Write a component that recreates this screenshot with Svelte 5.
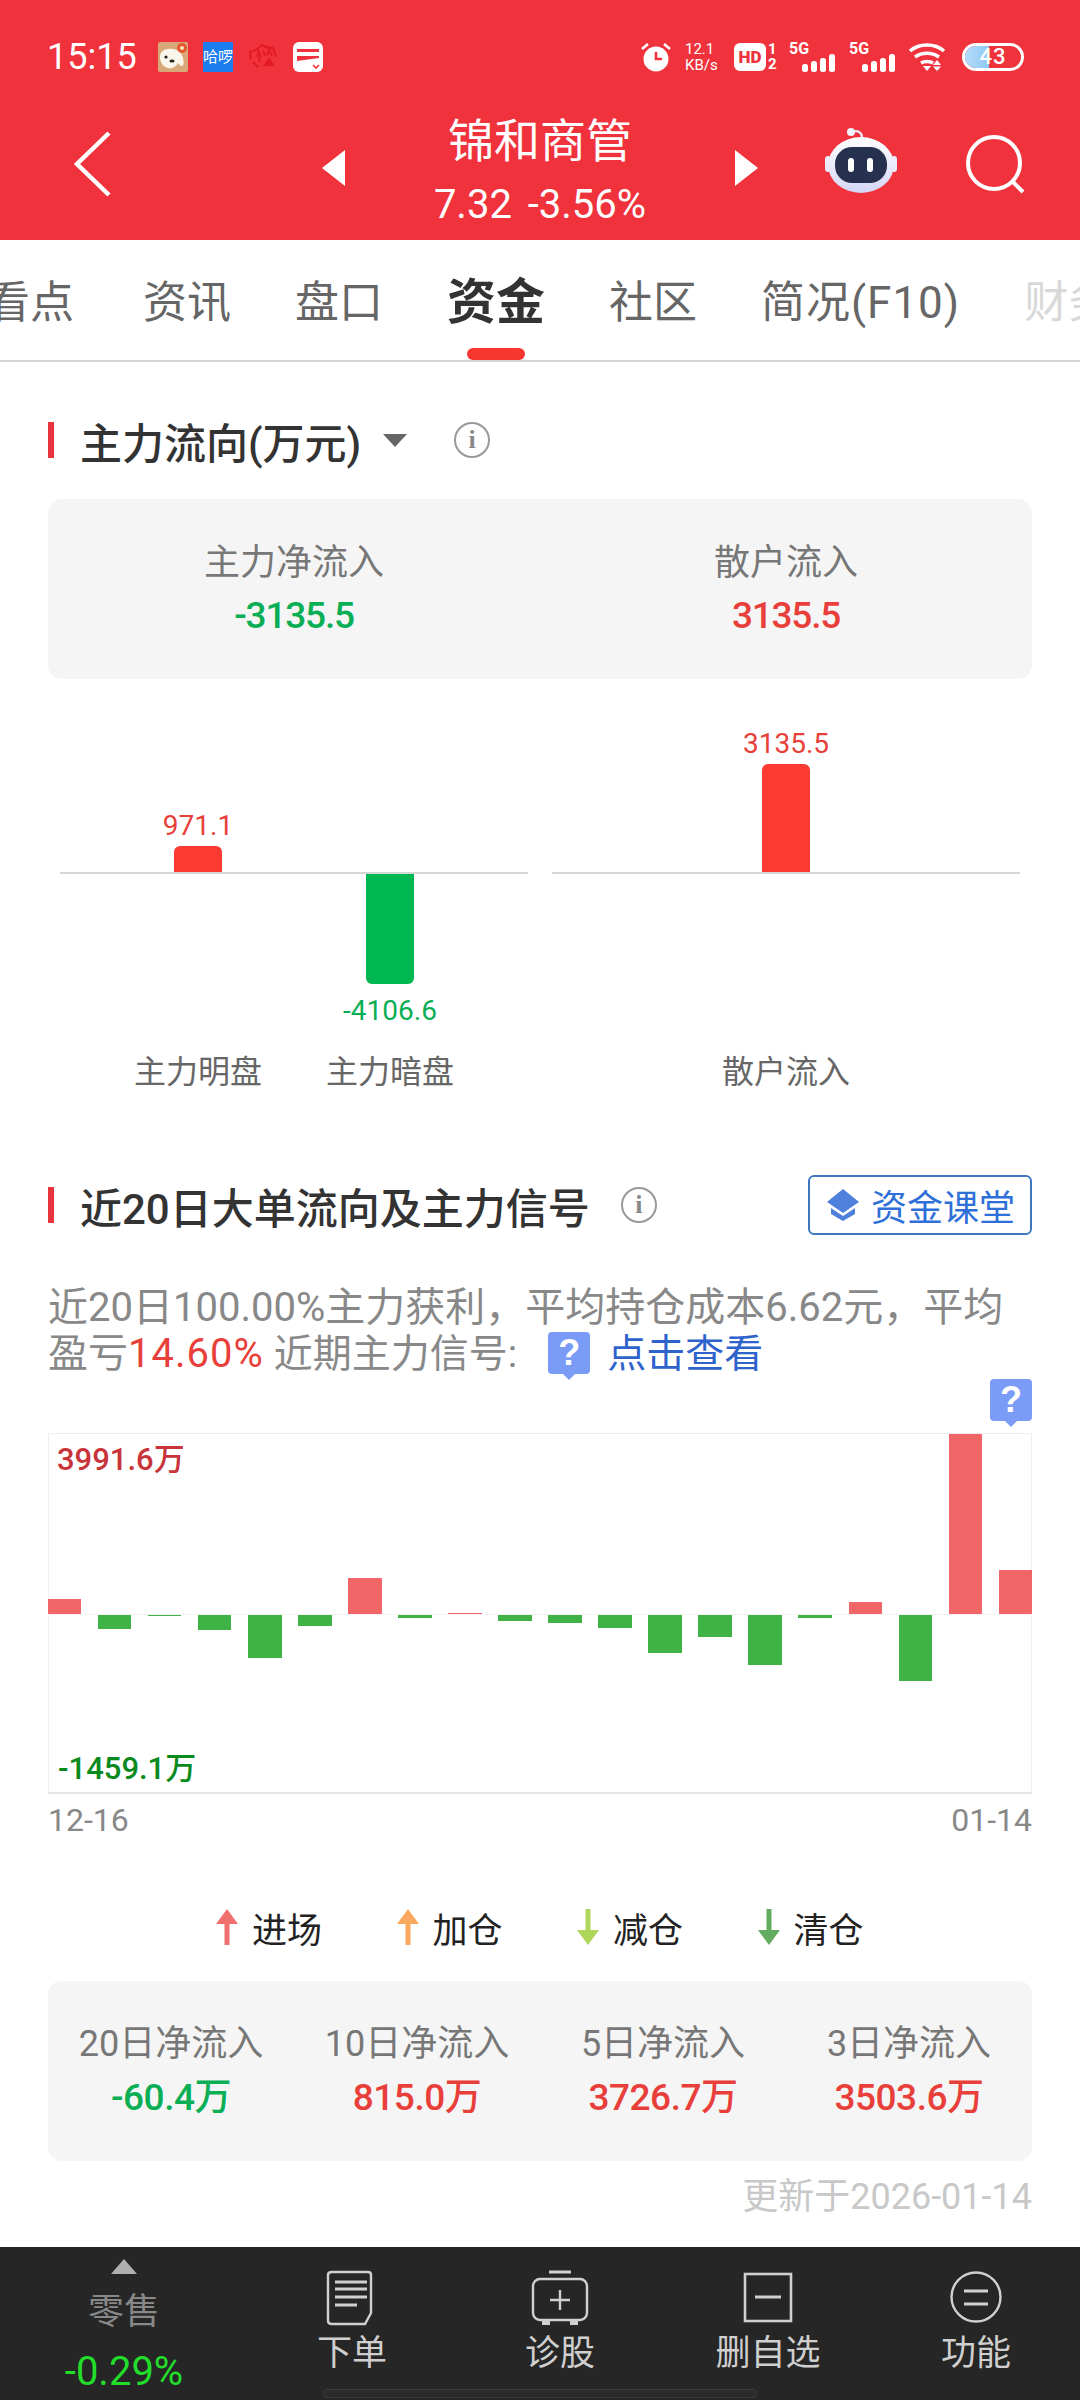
<script>
  const tabs = ["看点", "资讯", "盘口", "资金", "社区", "简况(F10)", "财务"];

  const mainCols = [
    { label: "主力明盘", value: "971.1", h: 26, up: true },
    { label: "主力暗盘", value: "-4106.6", h: 110, up: false },
  ];

  // one value per day, px from the zero line
  const days = [15, -14.3, -1, -14.7, -43, -10.7, 35.7, -3, 0.7, -5.7, -8.3, -13.3, -38.3, -22.3, -50.3, -2.7, 12.3, -66.3, 180.3, 43.7];

  const legend = [
    { name: "进场", color: "#f07070", up: true },
    { name: "加仓", color: "#fba95f", up: true },
    { name: "减仓", color: "#aed65a", up: false },
    { name: "清仓", color: "#62ab5f", up: false },
  ];

  const net = [
    { label: "20日净流入", value: "-60.4万", down: true },
    { label: "10日净流入", value: "815.0万" },
    { label: "5日净流入", value: "3726.7万" },
    { label: "3日净流入", value: "3503.6万" },
  ];
</script>

<div class="page">
  <header class="top">
    <div class="status">
      <span class="time">15:15</span>
      <div class="apps">
        <svg width="30" height="30" viewBox="0 0 30 30">
          <rect width="30" height="30" rx="2" fill="#d9a878" />
          <path d="M2 15c0-6 6-9 12-8 6 0 10 4 11 9 1 4 1 7-1 8-2 0-3-2-4-3-2 4-6 6-10 5-5-1-8-6-8-11z" fill="#fbf6ec" />
          <circle cx="8" cy="15" r="1.6" fill="#222" />
          <ellipse cx="14" cy="19" rx="2.6" ry="1.6" fill="#222" />
          <circle cx="24" cy="6" r="5" fill="#e5572c" />
          <circle cx="24" cy="6" r="2" fill="#fbe3c0" />
        </svg>
        <span class="hello">哈啰</span>
        <svg width="30" height="30" viewBox="0 0 30 30" fill="none" stroke="#e31b23" stroke-width="2">
          <path d="M3 17 2 10l8-3 3 9M8 8l6-5 8 4-3 6M16 4l9 2 3 9" />
          <path d="M9 11l3 9M15 8l2 6M22 10l2 4" />
          <path d="M21 15l6 9H15z" fill="#e31b23" stroke="none" />
          <path d="M5 20l5 5" />
        </svg>
        <svg width="30" height="30" viewBox="0 0 30 30">
          <rect width="30" height="30" rx="6" fill="#fff" />
          <rect x="4" y="7" width="22" height="3" fill="#f0323c" />
          <path d="M4 14h22v2L4 19z" fill="#f0323c" />
          <path d="M20 23l3 3 3-3" fill="none" stroke="#f0323c" stroke-width="1.6" />
        </svg>
      </div>
      <div class="sys">
        <svg class="alarm" width="30" height="30" viewBox="0 0 30 30">
          <circle cx="15" cy="17" r="12.5" fill="#fff" />
          <path d="M15 10v7h6" fill="none" stroke="#f0323c" stroke-width="2.6" />
          <path d="M1 7l6-5M29 7l-6-5" stroke="#fff" stroke-width="2.6" />
        </svg>
        <div class="speed"><span>12.1</span><span>KB/s</span></div>
        <div class="hd">
          <span class="hd-box">HD</span>
          <div class="hd-nums"><span>1</span><span>2</span></div>
        </div>
        <div class="net">
          <span>5G</span>
          <svg width="34" height="18" viewBox="0 0 34 18" fill="#fff">
            <rect x="0" y="10" width="6" height="8" rx="2.5" />
            <rect x="9" y="7" width="6" height="11" rx="2.5" />
            <rect x="18" y="4" width="6" height="14" rx="2.5" />
            <rect x="27" y="0" width="6" height="18" rx="2.5" />
          </svg>
        </div>
        <div class="net second">
          <span>5G</span>
          <svg width="34" height="18" viewBox="0 0 34 18" fill="#fff">
            <rect x="0" y="10" width="6" height="8" rx="2.5" />
            <rect x="9" y="7" width="6" height="11" rx="2.5" />
            <rect x="18" y="4" width="6" height="14" rx="2.5" />
            <rect x="27" y="0" width="6" height="18" rx="2.5" />
          </svg>
        </div>
        <svg class="wifi" width="36" height="28" viewBox="0 0 36 28" fill="none" stroke="#fff" stroke-width="3.4">
          <path d="M1 8c9-8 25-8 34 0" />
          <path d="M6 14c7-5 17-5 24 0" />
          <path d="M12 20c3-2 9-2 12 0" />
          <path d="M14 23h8l-4 5z" fill="#fff" stroke="none" />
          <path d="M28 17l4 5h-8zM24 23.500h8l-4 4.500z" fill="#fff" stroke="none" />
        </svg>
        <div class="battery"><span class="level"></span><b>43</b></div>
      </div>
    </div>

    <nav class="bar">
      <div class="side left">
        <svg class="back" width="38" height="66" viewBox="0 0 38 66" fill="none" stroke="#fff" stroke-width="4.500">
          <path d="M35 2 3 33l32 31" />
        </svg>
        <span class="tri tri-l"></span>
      </div>
      <div class="name">
        <div class="title">锦和商管</div>
        <div class="price">7.32 -3.56%</div>
      </div>
      <div class="side right">
        <span class="tri tri-r"></span>
        <svg class="robot" width="72" height="66" viewBox="0 0 72 66">
          <defs>
            <linearGradient id="shell" x1="0" y1="0" x2="0" y2="1">
              <stop offset="0" stop-color="#ffffff" />
              <stop offset="1" stop-color="#d5d6f6" />
            </linearGradient>
          </defs>
          <path d="M26 6c6-4 11-1 11 5" fill="none" stroke="#e8e8f8" stroke-width="2.4" />
          <circle cx="26" cy="5" r="4" fill="#f4f4fc" />
          <rect x="0" y="29" width="6" height="16" rx="3" fill="#ececfa" />
          <rect x="66" y="29" width="6" height="16" rx="3" fill="#ececfa" />
          <ellipse cx="36" cy="38" rx="33" ry="28" fill="url(#shell)" />
          <rect x="10" y="20" width="52" height="36" rx="17" fill="#26304f" />
          <rect x="23" y="31" width="6" height="14" rx="3" fill="#fff" />
          <rect x="42" y="31" width="6" height="14" rx="3" fill="#fff" />
        </svg>
        <svg class="search" width="60" height="60" viewBox="0 0 60 60" fill="none" stroke="#fff" stroke-width="4">
          <circle cx="28" cy="28" r="26" />
          <path d="M47 47l10 10" />
        </svg>
      </div>
    </nav>
  </header>

  <div class="tabs">
    {#each tabs as tab, i}
      <span class="tab" class:active={tab === "资金"} class:wide={tab.includes("F10")} class:first={i === 0} class:faded={i === tabs.length - 1}>{tab}</span>
    {/each}
  </div>

  <section class="flow">
    <div class="head">
      <h2>主力流向(万元)</h2>
      <span class="caret"></span>
      <span class="info">i</span>
    </div>

    <div class="summary">
      <div>
        <p>主力净流入</p>
        <strong class="green">-3135.5</strong>
      </div>
      <div>
        <p>散户流入</p>
        <strong class="red">3135.5</strong>
      </div>
    </div>

    <div class="panels">
      <div class="panel">
        <div class="plot">
          {#each mainCols as c}
            <div class="col">
              <div class="above">
                {#if c.up}
                  <span class="num red">{c.value}</span>
                  <span class="bar-up" style="height:{c.h}px"></span>
                {/if}
              </div>
              <div class="below">
                {#if !c.up}
                  <span class="bar-down" style="height:{c.h}px"></span>
                  <span class="num green">{c.value}</span>
                {/if}
              </div>
            </div>
          {/each}
        </div>
        <div class="names">
          {#each mainCols as c}
            <span>{c.label}</span>
          {/each}
        </div>
      </div>
      <div class="panel">
        <div class="plot">
          <div class="col">
            <div class="above">
              <span class="num red">3135.5</span>
              <span class="bar-up" style="height:108px"></span>
            </div>
            <div class="below"></div>
          </div>
        </div>
        <div class="names">
          <span>散户流入</span>
        </div>
      </div>
    </div>
  </section>

  <section class="signal">
    <div class="head head-two">
      <h2>近20日大单流向及主力信号</h2>
      <span class="info">i</span>
      <span class="course">
        <svg width="34" height="32" viewBox="0 0 34 32">
          <path d="M17 0l16 13-16 11L1 13z" fill="#4f80dc" />
          <path d="M5 19l12 8 12-8v6L17 32 5 25z" fill="#4f80dc" />
        </svg>
        资金课堂
      </span>
    </div>

    <p class="desc">
      近20日100.00%主力获利，平均持仓成本6.62元，平均
      盈亏<span class="loss">14.60%</span> <span class="tight">近期主力信号:</span><span class="ask inline">?</span><span class="link">点击查看</span>
    </p>

    <div class="ask-row"><span class="ask">?</span></div>

    <div class="chart">
      <span class="max">3991.6万</span>
      <span class="min">-1459.1万</span>
      <div class="half top-half">
        {#each days as v}
          <span class="day" style="height:{v > 0 ? v : 0}px"></span>
        {/each}
      </div>
      <div class="half low-half">
        {#each days as v}
          <span class="day neg" style="height:{v < 0 ? -v : 0}px"></span>
        {/each}
      </div>
    </div>
    <div class="dates"><span>12-16</span><span>01-14</span></div>

    <div class="legend">
      {#each legend as item}
        <div class="key">
          <svg width="24" height="36" viewBox="0 0 24 36">
            {#if item.up}
              <path d="M12 0l11 15h-8.500v21h-5V15H1z" fill={item.color} />
            {:else}
              <path d="M12 36 1 21h8.500V0h5v21H23z" fill={item.color} />
            {/if}
          </svg>
          <span>{item.name}</span>
        </div>
      {/each}
    </div>

    <div class="netflow">
      {#each net as n}
        <div>
          <p>{n.label}</p>
          <strong class={n.down ? "green" : "red"}>{n.value}</strong>
        </div>
      {/each}
    </div>

    <div class="updated">更新于2026-01-14</div>
  </section>

  <footer class="dock">
    <div class="dock-first">
      <span class="up-tri"></span>
      <span class="retail">零售</span>
      <span class="pct">-0.29%</span>
    </div>
    <div class="dock-item">
      <svg width="60" height="60" viewBox="0 0 60 60" fill="none" stroke="#d0d0d0" stroke-width="2.400">
        <path d="M10 5h36q3 0 3 3v38l-6 11H10q-4 0-4-3V8q0-3 4-3z" />
        <path d="M13 15h32M13 22h32M13 30h32M13 38h22" stroke-width="2.800" />
      </svg>
      <span>下单</span>
    </div>
    <div class="dock-item">
      <svg width="60" height="60" viewBox="0 0 60 60" fill="none" stroke="#d0d0d0" stroke-width="2.400">
        <path d="M19 5h22" stroke-width="3" />
        <rect x="3" y="12" width="54" height="41" rx="7" />
        <path d="M30 23v20M20 33h20" />
        <path d="M12 53h8v5h-8zM40 53h8v5h-8z" fill="#d0d0d0" stroke="none" />
      </svg>
      <span>诊股</span>
    </div>
    <div class="dock-item">
      <svg width="60" height="60" viewBox="0 0 60 60" fill="none" stroke="#d0d0d0" stroke-width="2.600">
        <rect x="7" y="7" width="46" height="47" />
        <path d="M17 30h26" stroke-width="3" />
      </svg>
      <span>删自选</span>
    </div>
    <div class="dock-item">
      <svg width="60" height="60" viewBox="0 0 60 60" fill="none" stroke="#d0d0d0" stroke-width="2.400">
        <circle cx="30" cy="30" r="24.500" />
        <path d="M18 24h24M18 37h24" stroke-width="3" />
      </svg>
      <span>功能</span>
    </div>
    <span class="home"></span>
  </footer>
</div>

<style>
  :global(body) {
    background: #fff;
  }
  .page {
    width: 1080px;
    height: 2400px;
    display: flex;
    flex-direction: column;
    overflow: hidden;
    font-family: Roboto, "Noto Sans CJK SC", sans-serif;
    color: #333;
  }
  p,
  h2 {
    margin: 0;
    font-weight: 400;
  }

  /* red header */
  .top {
    height: 240px;
    background: #f0323c;
    color: #fff;
    flex: none;
  }
  .status {
    height: 114px;
    display: flex;
    align-items: center;
    padding: 0 56px 0 47px;
  }
  .time {
    font-size: 36px;
    width: 111px;
  }
  .apps {
    display: flex;
    gap: 15px;
    align-items: center;
  }
  .hello {
    width: 30px;
    height: 30px;
    background: #1b7df0;
    color: #fff;
    font-size: 15px;
    line-height: 30px;
    text-align: center;
    white-space: nowrap;
  }
  .sys {
    margin-left: auto;
    display: flex;
    align-items: center;
  }
  .speed {
    display: flex;
    flex-direction: column;
    margin-left: 14px;
    font-size: 15px;
    line-height: 16px;
    width: 49px;
    text-align: left;
  }
  .hd {
    display: flex;
    align-items: center;
  }
  .hd-box {
    width: 32px;
    height: 28px;
    background: #fff;
    color: #f0323c;
    border-radius: 6px;
    font-size: 17px;
    font-weight: 900;
    line-height: 28px;
    text-align: center;
  }
  .hd-nums {
    display: flex;
    flex-direction: column;
    font-size: 15px;
    font-weight: 700;
    line-height: 15px;
    margin-left: 2px;
    width: 10px;
  }
  .net {
    position: relative;
    width: 47px;
    height: 30px;
    margin-left: 11px;
    display: flex;
    justify-content: flex-end;
    align-items: flex-end;
  }
  .net.second {
    margin-left: 13px;
  }
  .net span {
    position: absolute;
    left: 0;
    top: -2px;
    font-size: 16px;
    font-weight: 700;
    line-height: 18px;
  }
  .wifi {
    margin-left: 13px;
  }
  .battery {
    position: relative;
    width: 62px;
    height: 28px;
    margin-left: 17px;
    border: 3px solid #fff;
    border-radius: 14px;
    box-sizing: border-box;
    overflow: hidden;
    text-align: center;
  }
  .level {
    position: absolute;
    left: 0;
    top: 0;
    bottom: 0;
    width: 42%;
    background: linear-gradient(90deg, #b4dcfa, #8fc8f5);
  }
  .battery b {
    position: relative;
    font-size: 22px;
    font-weight: 500;
    line-height: 22px;
    display: block;
    letter-spacing: 1px;
  }

  .bar {
    display: grid;
    grid-template-columns: 360px 360px 360px;
    height: 126px;
    align-items: start;
  }
  .side {
    display: flex;
    align-items: center;
    height: 108px;
  }
  .side.left {
    justify-content: space-between;
    padding: 0 15px 0 74px;
  }
  .side.right {
    padding: 0 54px 0 15px;
  }
  .back {
    margin-bottom: 8px;
  }
  .tri {
    width: 0;
    height: 0;
    border-top: 18px solid transparent;
    border-bottom: 18px solid transparent;
  }
  .tri-l {
    border-right: 23px solid #fff;
  }
  .tri-r {
    border-left: 23px solid #fff;
  }
  .robot {
    margin: 0 0 16px 67px;
  }
  .search {
    margin: 0 0 6px 69px;
  }
  .name {
    text-align: center;
    margin-top: -4px;
  }
  .title {
    font-size: 46px;
    line-height: 62px;
  }
  .price {
    font-size: 40px;
    line-height: 46px;
    margin-top: 10px;
    word-spacing: 6px;
    white-space: pre;
  }

  /* tabs */
  .tabs {
    height: 122px;
    flex: none;
    display: flex;
    gap: 64px;
    align-items: center;
    padding-top: 6px;
    margin-left: -14px;
    box-sizing: border-box;
    border-bottom: 2px solid #d4d4d4;
    white-space: nowrap;
    width: 1094px;
    overflow: hidden;
  }
  .tab {
    display: block;
    flex: none;
    font-size: 44px;
    line-height: 60px;
    color: #666;
    position: relative;
  }
  .tab.first {
    margin-right: 5px;
  }
  .tab.wide {
    letter-spacing: 1px;
  }
  .tab.active {
    font-size: 49px;
    font-weight: 700;
    color: #333;
  }
  .tab.active::after {
    content: "";
    position: absolute;
    left: 20px;
    right: 20px;
    top: 75px;
    height: 12px;
    background: #f5372f;
    border-radius: 6px;
  }
  .tab.faded {
    color: #d8d8d8;
  }

  /* section heads */
  .head {
    position: relative;
    display: flex;
    align-items: center;
    height: 36px;
    padding-left: 26px;
    border-left: 6px solid #e8343c;
    margin-left: 48px;
  }
  .head h2 {
    font-size: 42px;
    font-weight: 500;
    color: #333;
    white-space: nowrap;
  }
  .caret {
    width: 0;
    height: 0;
    margin-left: 22px;
    border-left: 12px solid transparent;
    border-right: 12px solid transparent;
    border-top: 13px solid #666;
  }
  .info {
    width: 32px;
    height: 32px;
    margin-left: 47px;
    border: 2px solid #999;
    border-radius: 50%;
    color: #888;
    font-family: "Liberation Serif", serif;
    font-size: 26px;
    font-weight: 700;
    line-height: 32px;
    text-align: center;
  }
  .head-two .info {
    margin-left: 31px;
  }

  .flow {
    padding-top: 60px;
  }
  .summary {
    margin: 41px 48px 0;
    height: 180px;
    background: #f5f5f5;
    border-radius: 14px;
    display: grid;
    grid-template-columns: 492px 492px;
    text-align: center;
    padding-top: 42px;
    box-sizing: border-box;
  }
  .summary p {
    font-size: 36px;
    line-height: 44px;
    color: #777;
  }
  .summary strong {
    display: block;
    font-size: 37px;
    font-weight: 500;
    line-height: 46px;
    margin-top: 8px;
    letter-spacing: -1.2px;
  }
  .green {
    color: #09ae55;
  }
  .red {
    color: #e83f3a;
  }

  .panels {
    display: flex;
    gap: 24px;
    margin: 0 60px;
  }
  .panel {
    width: 468px;
  }
  .plot {
    display: flex;
    justify-content: center;
    overflow: hidden;
  }
  .col {
    width: 192px;
  }
  .above {
    height: 193px;
    display: flex;
    flex-direction: column;
    align-items: center;
    justify-content: flex-end;
    border-bottom: 2px solid #d6d6d6;
    margin: 0 -200px;
  }
  .below {
    height: 176px;
    display: flex;
    flex-direction: column;
    align-items: center;
  }
  .num {
    font-size: 28px;
    line-height: 36px;
    margin-bottom: 2px;
  }
  .below .num {
    margin-top: 9px;
  }
  .bar-up,
  .bar-down {
    width: 48px;
    flex: none;
  }
  .bar-up {
    background: #fb3a32;
    border-radius: 6px 6px 0 0;
  }
  .bar-down {
    background: #00b852;
    border-radius: 0 0 6px 6px;
  }
  .names {
    display: flex;
    justify-content: center;
    font-size: 32px;
    line-height: 44px;
    color: #666;
  }
  .names span {
    width: 192px;
    text-align: center;
  }

  /* signal section */
  .signal {
    padding-top: 93px;
  }
  .head-two {
    margin-right: 48px;
  }
  .course {
    margin-left: auto;
    height: 60px;
    width: 224px;
    flex: none;
    box-sizing: border-box;
    border: 2px solid #3f78bd;
    border-radius: 6px;
    display: flex;
    align-items: center;
    gap: 11px;
    padding-left: 16px;
    font-size: 36px;
    color: #2f6fd8;
    white-space: nowrap;
  }
  .desc {
    margin: 62px 48px 0;
    height: 96px;
    font-size: 40px;
    line-height: 46px;
    color: #888;
  }
  .loss {
    color: #e83f3a;
    letter-spacing: 1px;
  }
  .tight {
    font-size: 39px;
  }
  .link {
    color: #2f63cc;
    font-size: 39px;
  }
  .ask {
    position: relative;
    display: inline-block;
    width: 42px;
    height: 42px;
    background: #7b9cf6;
    border-radius: 4px;
    color: #fff;
    font-family: "Liberation Sans", sans-serif;
    font-size: 36px;
    font-weight: 700;
    line-height: 42px;
    text-align: center;
  }
  .ask::after {
    content: "";
    position: absolute;
    left: 15px;
    top: 42px;
    border-left: 6px solid transparent;
    border-right: 6px solid transparent;
    border-top: 6px solid #7b9cf6;
  }
  .ask.inline {
    margin: 0 17px 0 31px;
    vertical-align: 2px;
  }
  .ask-row {
    display: flex;
    justify-content: flex-end;
    height: 53px;
    margin: -2px 48px 0;
  }
  .chart {
    position: relative;
    margin: 1px 48px 0;
    height: 361px;
    box-sizing: border-box;
    border: 1px solid #eee;
    border-bottom: 2px solid #e6e6e6;
  }
  .half {
    display: flex;
    justify-content: space-between;
    margin: 0 -1px;
  }
  .top-half {
    height: 180px;
    align-items: flex-end;
    border-bottom: 1px solid #f2f2f2;
  }
  .day {
    width: 33.4px;
    background: #ef6568;
  }
  .day.neg {
    background: #40b347;
  }
  .max,
  .min {
    position: absolute;
    left: 8px;
    font-size: 31px;
    font-weight: 500;
    line-height: 34px;
  }
  .max {
    top: 9px;
    color: #c8343a;
  }
  .min {
    left: 9px;
    bottom: 6px;
    color: #0a8a1c;
  }
  .dates {
    display: flex;
    justify-content: space-between;
    margin: 9px 48px 0;
    font-size: 32px;
    line-height: 34px;
    color: #888;
  }
  .legend {
    display: flex;
    margin: 68px 0 0 215px;
    height: 44px;
    align-items: center;
  }
  .key {
    width: 180.500px;
    display: flex;
    align-items: center;
    gap: 13px;
    font-size: 35px;
    color: #222;
  }
  .netflow {
    margin: 32px 48px 0;
    height: 180px;
    background: #f5f5f5;
    border-radius: 14px;
    display: grid;
    grid-template-columns: repeat(4, 1fr);
    text-align: center;
    padding-top: 42px;
    box-sizing: border-box;
  }
  .netflow p {
    font-size: 36px;
    line-height: 42px;
    color: #777;
    white-space: nowrap;
  }
  .netflow strong {
    display: block;
    font-size: 37px;
    font-weight: 500;
    line-height: 46px;
    margin-top: 10px;
    letter-spacing: -0.5px;
  }
  .updated {
    margin: 16px 48px 0 0;
    text-align: right;
    font-size: 36px;
    line-height: 40px;
    color: #c8c8c8;
  }

  /* bottom dock */
  .dock {
    position: absolute;
    left: 0;
    top: 2247px;
    width: 1080px;
    height: 153px;
    background: #262626;
    display: grid;
    grid-template-columns: 248px repeat(4, 208px);
  }
  .dock-first {
    display: flex;
    flex-direction: column;
    align-items: center;
  }
  .up-tri {
    margin-top: 12px;
    border-left: 13px solid transparent;
    border-right: 13px solid transparent;
    border-bottom: 15px solid #b0b0b0;
  }
  .retail {
    margin-top: 16px;
    font-size: 36px;
    line-height: 44px;
    color: #888;
  }
  .pct {
    margin-top: 16px;
    font-size: 40px;
    line-height: 44px;
    color: #22dd2a;
  }
  .dock-item {
    display: flex;
    flex-direction: column;
    align-items: center;
    padding-top: 20px;
    color: #cfcfcf;
    font-size: 35px;
    line-height: 44px;
  }
  .dock-item span {
    margin-top: 5px;
  }
  .home {
    position: absolute;
    left: 323px;
    top: 142px;
    width: 434px;
    height: 9px;
    box-sizing: border-box;
    border: 1px solid #3c3c3c;
    border-radius: 4px;
    background: #2a2a2a;
  }
</style>
